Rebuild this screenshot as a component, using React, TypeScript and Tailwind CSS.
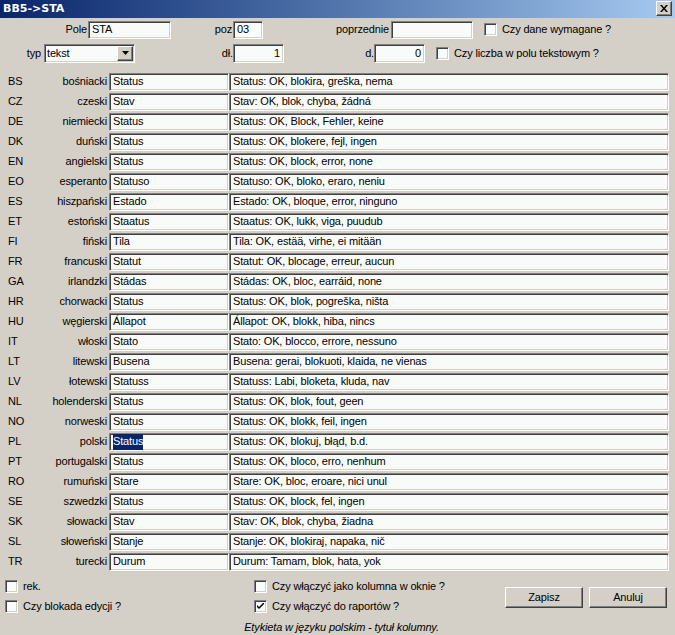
import React from "react";

const rows: [string, string, string, string][] = [
  ["BS", "bośniacki", "Status", "Status: OK, blokira, greška, nema"],
  ["CZ", "czeski", "Stav", "Stav: OK, blok, chyba, žádná"],
  ["DE", "niemiecki", "Status", "Status: OK, Block, Fehler, keine"],
  ["DK", "duński", "Status", "Status: OK, blokere, fejl, ingen"],
  ["EN", "angielski", "Status", "Status: OK, block, error, none"],
  ["EO", "esperanto", "Statuso", "Statuso: OK, bloko, eraro, neniu"],
  ["ES", "hiszpański", "Estado", "Estado: OK, bloque, error, ninguno"],
  ["ET", "estoński", "Staatus", "Staatus: OK, lukk, viga, puudub"],
  ["FI", "fiński", "Tila", "Tila: OK, estää, virhe, ei mitään"],
  ["FR", "francuski", "Statut", "Statut: OK, blocage, erreur, aucun"],
  ["GA", "irlandzki", "Stádas", "Stádas: OK, bloc, earráid, none"],
  ["HR", "chorwacki", "Status", "Status: OK, blok, pogreška, ništa"],
  ["HU", "węgierski", "Állapot", "Állapot: OK, blokk, hiba, nincs"],
  ["IT", "włoski", "Stato", "Stato: OK, blocco, errore, nessuno"],
  ["LT", "litewski", "Busena", "Busena: gerai, blokuoti, klaida, ne vienas"],
  ["LV", "łotewski", "Statuss", "Statuss: Labi, bloketa, kluda, nav"],
  ["NL", "holenderski", "Status", "Status: OK, blok, fout, geen"],
  ["NO", "norweski", "Status", "Status: OK, blokk, feil, ingen"],
  ["PL", "polski", "Status", "Status: OK, blokuj, błąd, b.d."],
  ["PT", "portugalski", "Status", "Status: OK, bloco, erro, nenhum"],
  ["RO", "rumuński", "Stare", "Stare: OK, bloc, eroare, nici unul"],
  ["SE", "szwedzki", "Status", "Status: OK, block, fel, ingen"],
  ["SK", "słowacki", "Stav", "Stav: OK, blok, chyba, žiadna"],
  ["SL", "słoweński", "Stanje", "Stanje: OK, blokiraj, napaka, nič"],
  ["TR", "turecki", "Durum", "Durum: Tamam, blok, hata, yok"],
];

const sunken =
  "border border-t-[#808080] border-l-[#808080] border-b-white border-r-white shadow-[inset_1px_1px_0_#404040,inset_-1px_-1px_0_#d4d0c8]";
const raised =
  "border border-t-white border-l-white border-b-[#404040] border-r-[#404040] shadow-[inset_-1px_-1px_0_#808080]";

function Field({
  value,
  className = "",
  right = false,
  selected = false,
}: {
  value: string;
  className?: string;
  right?: boolean;
  selected?: boolean;
}) {
  return (
    <div
      className={`${sunken} flex items-center overflow-hidden whitespace-nowrap bg-[#f8fbf8] px-[3px] ${
        right ? "justify-end" : ""
      } ${className}`}
    >
      {selected ? (
        <span className="bg-[#0a246a] text-white">{value}</span>
      ) : (
        value
      )}
    </div>
  );
}

function CheckBox({ checked = false }: { checked?: boolean }) {
  return (
    <div
      className={`${sunken} flex h-[13px] w-[13px] shrink-0 items-center justify-center bg-[#f8fbf8]`}
    >
      {checked && (
        <svg width="7" height="7" viewBox="0 0 7 7">
          <path d="M0 2 L0 4 L2 6 L7 1 L7 -1 L2 4 Z" fill="#000" />
        </svg>
      )}
    </div>
  );
}

function Check({
  label,
  checked,
  className = "",
}: {
  label: string;
  checked?: boolean;
  className?: string;
}) {
  return (
    <div className={`flex h-[13px] items-center gap-[5px] ${className}`}>
      <CheckBox checked={checked} />
      <span className="whitespace-nowrap">{label}</span>
    </div>
  );
}

function Button({ label }: { label: string }) {
  return (
    <div
      className={`${raised} flex h-[21px] w-[78px] items-center justify-center bg-[#d4d0c8]`}
    >
      {label}
    </div>
  );
}

export default function App() {
  return (
    <div className="flex h-[635px] w-[675px] flex-col overflow-hidden bg-[#d4d0c8] font-['Liberation_Sans',Arial,sans-serif] text-[11px] tracking-[-0.15px] text-black">
      {/* title bar */}
      <div className="flex h-[18px] items-center justify-between bg-gradient-to-r from-[#0a246a] to-[#a6caf0] pl-[3px] pr-[3px]">
        <span className="font-['DejaVu_Sans',sans-serif] text-[11px] font-bold tracking-[0px] text-white">
          BB5-&gt;STA
        </span>
        <div
          className={`${raised} flex h-[15px] w-[16px] items-center justify-center bg-[#d4d0c8]`}
        >
          <svg width="8" height="7" viewBox="0 0 8 7">
            <path
              d="M0 0 H2 L4 2.5 L6 0 H8 L5 3.5 L8 7 H6 L4 4.5 L2 7 H0 L3 3.5 Z"
              fill="#000"
            />
          </svg>
        </div>
      </div>

      {/* header row 1 */}
      <div className="mt-[3px] flex h-[18px] items-center">
        <span className="w-[88px] pr-[1px] text-right">Pole</span>
        <Field value="STA" className="h-[18px] w-[83px]" />
        <span className="w-[62px] pr-[1px] text-right">poz</span>
        <Field value="03" className="h-[18px] w-[30px]" />
        <span className="w-[128px] pr-[2px] text-right">poprzednie</span>
        <Field value="" className="h-[18px] w-[82px]" />
        <Check label="Czy dane wymagane ?" className="ml-[11px]" />
      </div>

      {/* header row 2 */}
      <div className="mt-[5px] flex h-[19px] items-center">
        <span className="w-[44px] pr-[3px] text-right">typ</span>
        <div
          className={`${sunken} flex h-[19px] w-[91px] items-center justify-between bg-[#f8fbf8] pl-[2px] pr-[1px]`}
        >
          <span>tekst</span>
          <div
            className={`${raised} flex h-[15px] w-[16px] items-center justify-center bg-[#d4d0c8]`}
          >
            <svg width="7" height="4" viewBox="0 0 7 4">
              <path d="M0 0 H7 L3.5 4 Z" fill="#000" />
            </svg>
          </div>
        </div>
        <span className="w-[98px] text-right">dł.</span>
        <Field value="1" right className="h-[19px] w-[51px]" />
        <span className="w-[90px] text-right">d.</span>
        <Field value="0" right className="h-[19px] w-[51px]" />
        <Check label="Czy liczba w polu tekstowym ?" className="ml-[11px]" />
      </div>

      {/* translations grid */}
      <div className="mt-[10px] flex flex-col gap-[2px]">
        {rows.map(([code, lang, short, long]) => (
          <div key={code} className="flex h-[18px] items-center">
            <div className="flex w-[109px] items-center justify-between pl-[8px] pr-[2px]">
              <span>{code}</span>
              <span>{lang}</span>
            </div>
            <Field
              value={short}
              selected={code === "PL"}
              className="h-[18px] w-[120px]"
            />
            <Field value={long} className="h-[18px] w-[440px]" />
          </div>
        ))}
      </div>

      {/* bottom options */}
      <div className="mt-[9px] flex">
        <div className="flex w-[254px] flex-col gap-[7px] pl-[5px]">
          <Check label="rek." />
          <Check label="Czy blokada edycji ?" />
        </div>
        <div className="flex w-[251px] flex-col gap-[7px]">
          <Check label="Czy włączyć jako kolumna w oknie ?" />
          <Check label="Czy włączyć do raportów ?" checked />
        </div>
        <div className="mt-[7px] flex gap-[6px]">
          <Button label="Zapisz" />
          <Button label="Anuluj" />
        </div>
      </div>

      <div className="mt-[6px] pl-[8px] text-center italic">
        Etykieta w języku polskim - tytuł kolumny.
      </div>
    </div>
  );
}
